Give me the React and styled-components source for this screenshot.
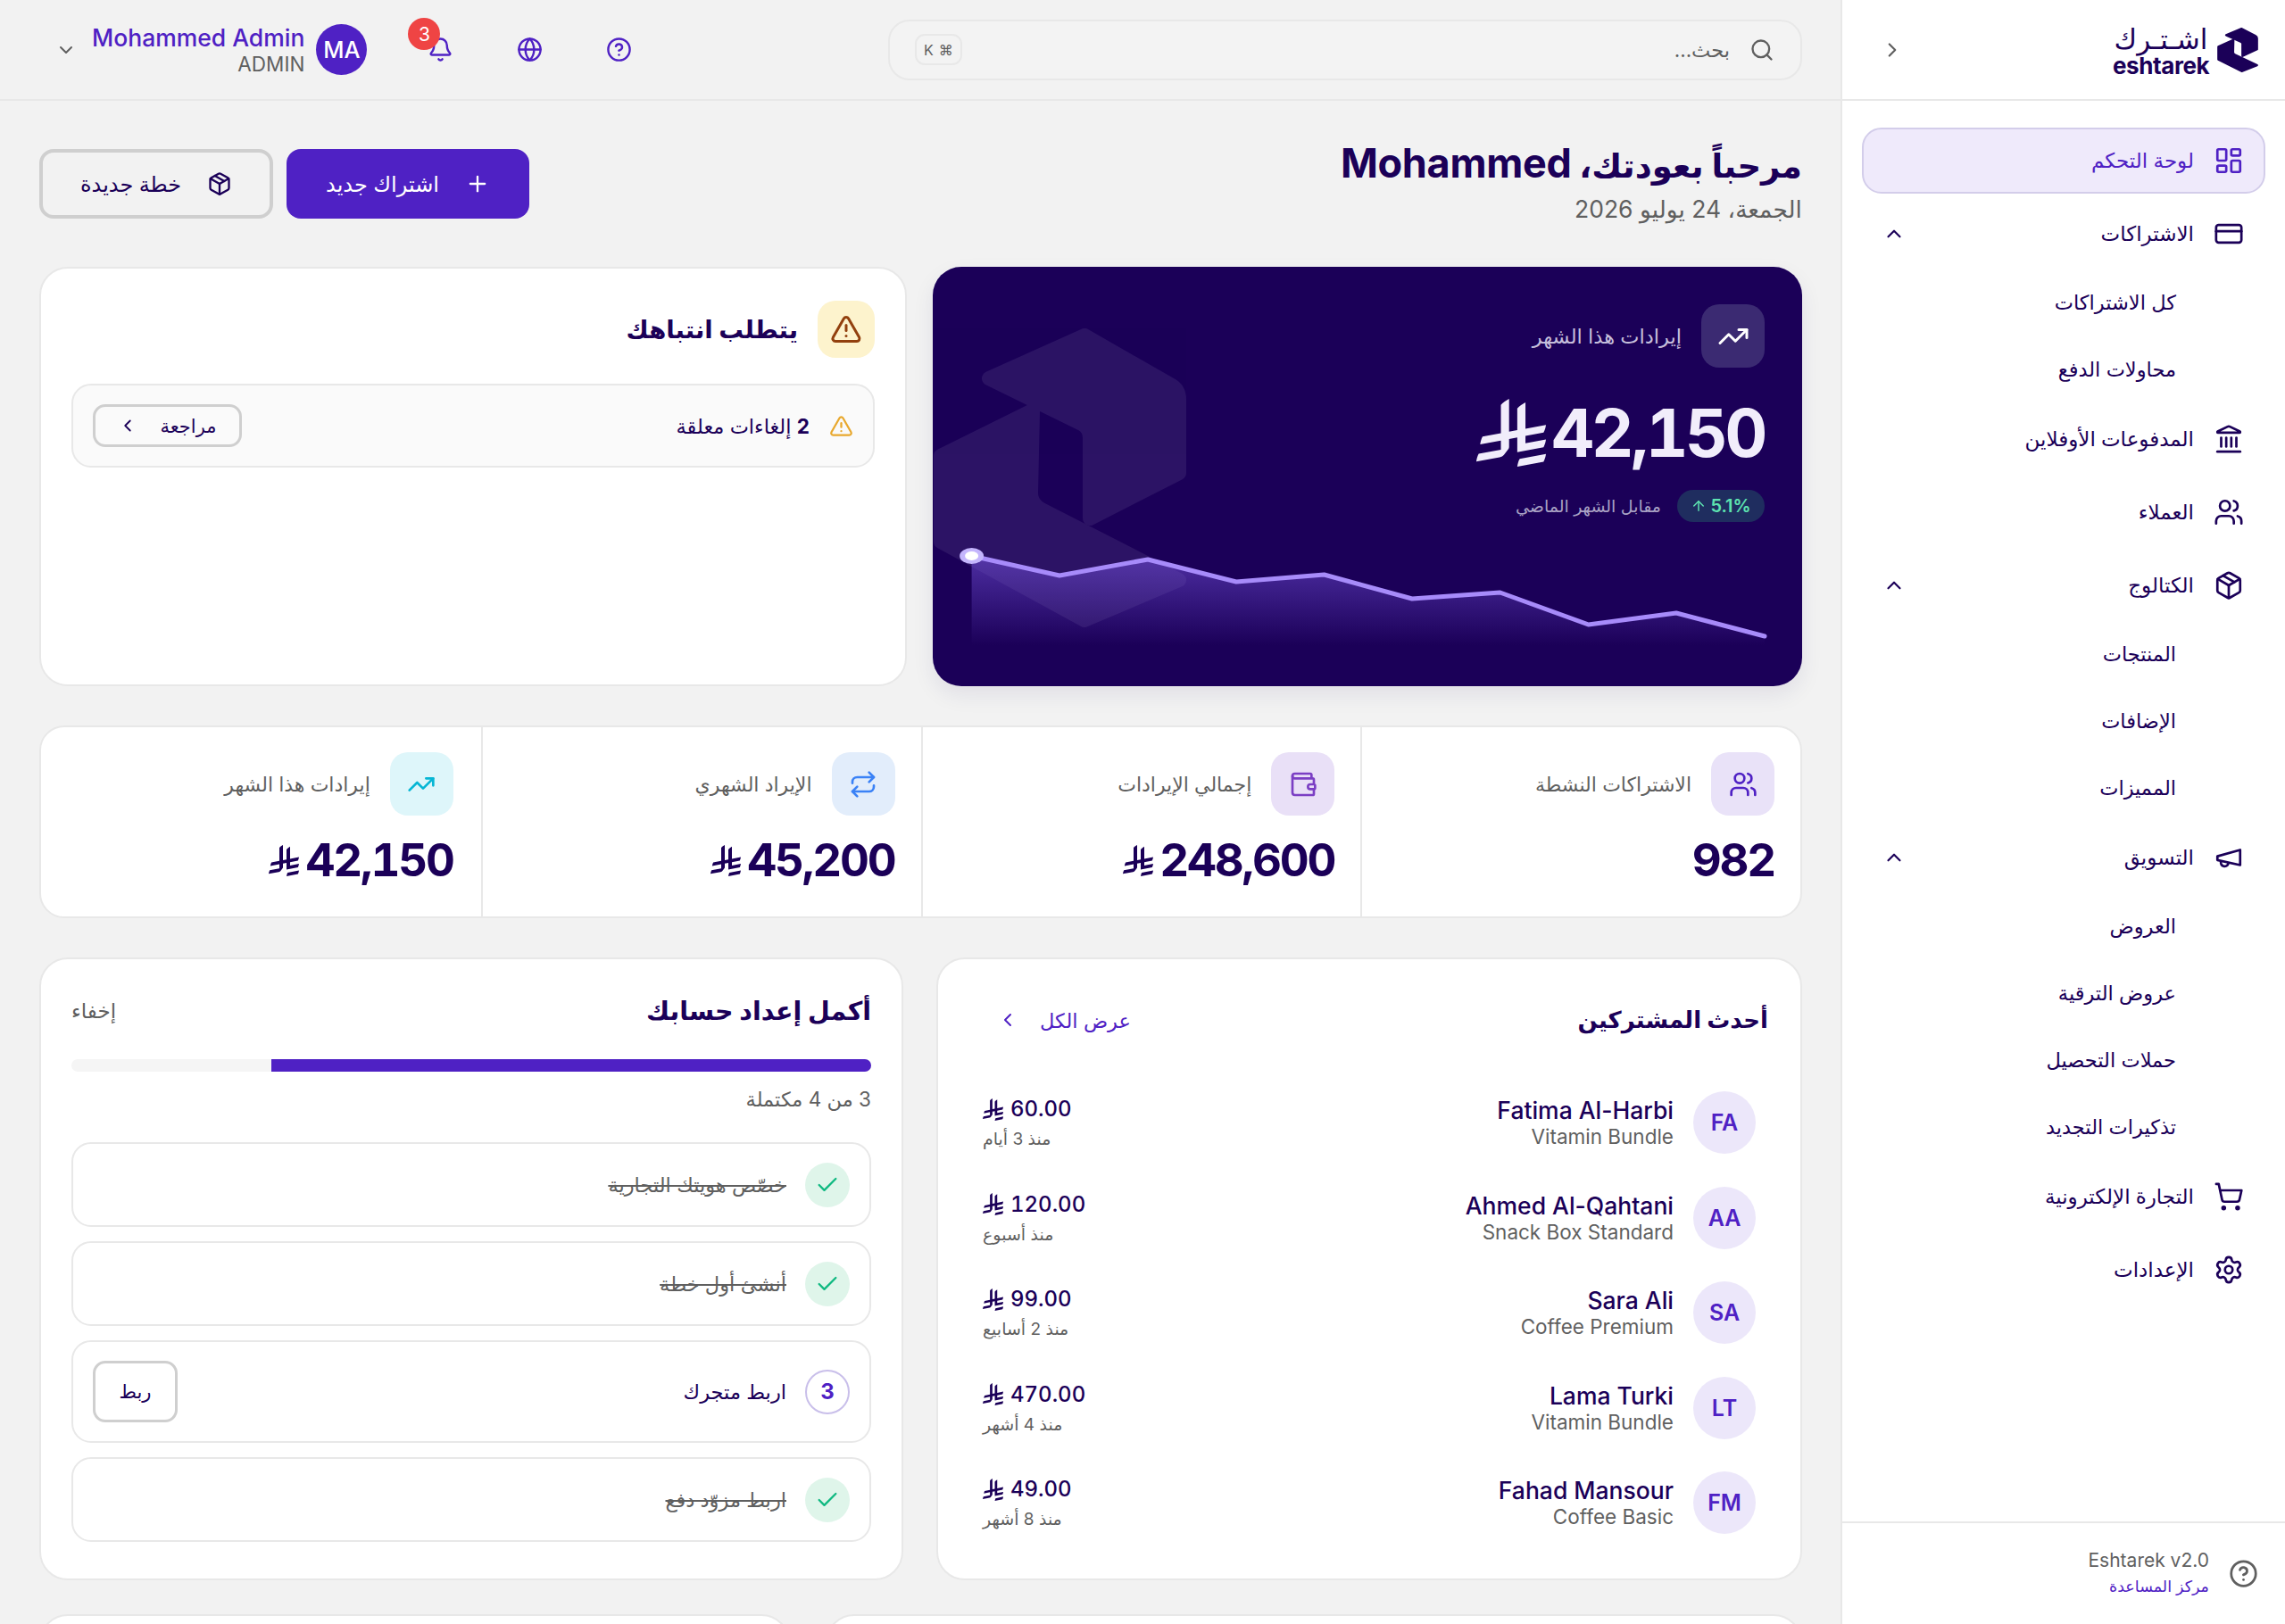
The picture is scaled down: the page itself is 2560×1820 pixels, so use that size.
import React from 'react';
import styled, { createGlobalStyle } from 'styled-components';
import {
  LayoutDashboard, CreditCard, Landmark, Users, Package, ShoppingCart, Settings,
  ChevronUp, ChevronLeft, ChevronRight, ChevronDown, Search, CircleHelp, Globe, Bell, Plus,
  TrendingUp, Wallet, Repeat, TriangleAlert, Check, ArrowUp,
} from 'lucide-react';

const ink = '#1b0058';
const brand = '#4f21c4';
const muted = '#5f5f5f';
const line = '#e8e8e8';
const stack = `Inter, "DejaVu Sans", "Noto Sans", sans-serif`;

const Global = createGlobalStyle`
  html, body { margin: 0; padding: 0; background: #f2f2f2; }
  body { font-family: ${stack}; color: ${ink}; }
  * { box-sizing: border-box; }
`;

const Shell = styled.div`
  direction: rtl;
  display: flex;
  width: 2560px;
  height: 1820px;
  overflow: hidden;
  background: #f2f2f2;
`;

/* ---------- sidebar ---------- */
const Sidebar = styled.aside`
  flex: 0 0 498px;
  display: flex;
  flex-direction: column;
  background: #fff;
  border-left: 2px solid ${line};
`;
const SideHead = styled.div`
  height: 113px;
  flex: none;
  display: flex;
  align-items: center;
  justify-content: space-between;
  padding: 0 30px 0 43px;
  border-bottom: 2px solid ${line};
  color: ${muted};
`;
const Logo = styled.div`
  display: flex;
  align-items: center;
  gap: 9px;
`;
const LogoWords = styled.div`
  display: flex;
  flex-direction: column;
  align-items: stretch;
  width: 108px;
  color: ${ink};
`;
const LogoAr = styled.span`
  font-size: 31px;
  line-height: 36px;
  text-align: center;
`;
const LogoEn = styled.span`
  direction: ltr;
  font-size: 26px;
  line-height: 24px;
  font-weight: 700;
  letter-spacing: -0.4px;
`;
const Nav = styled.nav`
  flex: 1;
  display: flex;
  flex-direction: column;
  gap: 8px;
  padding: 30px 22px 0;
`;
const NavItem = styled.div`
  height: 74px;
  flex: none;
  display: flex;
  align-items: center;
  gap: 22px;
  padding: 0 22px 0 21px;
  border-radius: 22px;
  font-size: 23px;
  font-weight: ${(p) => (p.$active ? 400 : 500)};
  color: ${(p) => (p.$active ? brand : ink)};
  background: ${(p) => (p.$active ? '#efeafb' : 'transparent')};
  border: 2px solid ${(p) => (p.$active ? '#d3cdea' : 'transparent')};
`;
const NavLabel = styled.span`
  flex: 1;
`;
const SubList = styled.div`
  display: flex;
  flex-direction: column;
  gap: 13px;
  padding: 0 100px 3px 0;
`;
const SubItem = styled.div`
  height: 62px;
  display: flex;
  align-items: center;
  font-size: 22.5px;
  color: ${ink};
`;
const SideFoot = styled.div`
  height: 115px;
  flex: none;
  display: flex;
  align-items: center;
  gap: 22px;
  padding: 0 30px;
  border-top: 2px solid ${line};
  color: ${muted};
`;
const FootText = styled.div`
  display: flex;
  flex-direction: column;
  gap: 3px;
`;
const FootVersion = styled.span`
  font-size: 21px;
  line-height: 26px;
  color: ${muted};
`;
const FootLink = styled.span`
  font-size: 17.5px;
  line-height: 26px;
  color: ${brand};
`;

/* ---------- top bar ---------- */
const Main = styled.main`
  flex: 1;
  min-width: 0;
  display: flex;
  flex-direction: column;
  overflow: hidden;
`;
const Topbar = styled.header`
  height: 113px;
  flex: none;
  display: flex;
  align-items: center;
  justify-content: space-between;
  padding: 0 43px 0 62px;
  border-bottom: 2px solid ${line};
`;
const SearchBox = styled.div`
  width: 1024px;
  height: 68px;
  display: flex;
  align-items: center;
  gap: 22px;
  padding: 0 29px 0 28px;
  background: #f3f3f3;
  border: 2px solid ${line};
  border-radius: 24px;
  color: ${muted};
`;
const Placeholder = styled.span`
  flex: 1;
  font-size: 22.5px;
`;
const Kbd = styled.span`
  direction: ltr;
  width: 53px;
  height: 35px;
  display: flex;
  align-items: center;
  justify-content: center;
  gap: 6px;
  font-size: 16px;
  border: 2px solid ${line};
  border-radius: 11px;
`;
const Tools = styled.div`
  display: flex;
  align-items: center;
`;
const ToolIcon = styled.span`
  position: relative;
  width: 100px;
  display: flex;
  justify-content: center;
  color: ${brand};
`;
const Count = styled.span`
  position: absolute;
  top: -21px;
  left: 14px;
  width: 36px;
  height: 36px;
  border-radius: 50%;
  background: #ef4444;
  color: #fff;
  font-size: 21px;
  display: flex;
  align-items: center;
  justify-content: center;
`;
const Avatar = styled.span`
  width: 57px;
  height: 57px;
  margin-right: 32px;
  border-radius: 50%;
  background: ${brand};
  color: #fff;
  font-size: 25.5px;
  font-weight: 500;
  display: flex;
  align-items: center;
  justify-content: center;
`;
const UserText = styled.div`
  display: flex;
  flex-direction: column;
  margin: 0 13px 0 17px;
`;
const UserName = styled.span`
  font-size: 26.5px;
  line-height: 32px;
  font-weight: 500;
  color: ${brand};
`;
const UserRole = styled.span`
  font-size: 22.5px;
  line-height: 28px;
  color: ${muted};
`;

/* ---------- content ---------- */
const Content = styled.div`
  display: flex;
  flex-direction: column;
  padding: 54px 43px 0 44px;
`;
const Heading = styled.div`
  height: 78px;
  display: flex;
  justify-content: space-between;
  align-items: flex-start;
`;
const TitleBlock = styled.div`
  display: flex;
  flex-direction: column;
  margin-top: -9px;
`;
const Title = styled.h1`
  margin: 0;
  font-size: 37px;
  line-height: 50px;
  font-weight: 700;
  color: ${ink};
`;
const TitleName = styled.span`
  font-size: 45px;
  letter-spacing: -0.3px;
`;
const DateText = styled.div`
  margin-top: 5px;
  font-size: 26.5px;
  line-height: 36px;
  color: ${muted};
`;
const Actions = styled.div`
  display: flex;
  gap: 15px;
`;
const Button = styled.div`
  height: 78px;
  width: ${(p) => p.$w}px;
  display: flex;
  align-items: center;
  justify-content: center;
  gap: 29px;
  font-size: 24px;
  font-weight: 500;
  border-radius: 16px;
  color: ${(p) => (p.$primary ? '#fff' : ink)};
  background: ${(p) => (p.$primary ? brand : 'transparent')};
  border: ${(p) => (p.$primary ? 'none' : '4px solid #cfcfcf')};
`;
const TopGrid = styled.div`
  margin-top: 54px;
  display: grid;
  grid-template-columns: 974px 972px;
  gap: 29px;
  height: 470px;
`;
const Hero = styled.section`
  position: relative;
  overflow: hidden;
  display: flex;
  flex-direction: column;
  padding: 42px;
  background: #1b0058;
  border-radius: 32px;
  box-shadow: 0 10px 24px rgba(27, 0, 88, 0.08);
`;
const HeroArt = styled.svg`
  position: absolute;
  left: 0;
  top: 0;
  width: 974px;
  height: 470px;
`;
const HeroHead = styled.div`
  position: relative;
  display: flex;
  align-items: center;
  gap: 22px;
  color: #c6bfdc;
  font-size: 22.5px;
`;
const IconBox = styled.span`
  flex: none;
  width: ${(p) => p.$size || 71}px;
  height: ${(p) => p.$size || 71}px;
  display: flex;
  align-items: center;
  justify-content: center;
  border-radius: 20px;
  background: ${(p) => p.$bg};
  color: ${(p) => p.$fg};
`;
const HeroValue = styled.div`
  position: relative;
  margin-top: 28px;
  height: 90px;
  display: flex;
  align-items: center;
  gap: 6px;
  font-size: 74px;
  line-height: 90px;
  font-weight: 700;
  letter-spacing: -3.4px;
  font-variant-numeric: tabular-nums;
  color: #f1edfb;
`;
const HeroMeta = styled.div`
  position: relative;
  margin-top: 19px;
  display: flex;
  align-items: center;
  gap: 18px;
  font-size: 19px;
  color: #a9a2c4;
`;
const Trend = styled.span`
  height: 36px;
  width: 98px;
  display: flex;
  align-items: center;
  justify-content: center;
  gap: 4px;
  border-radius: 18px;
  background: #1f2d5f;
  color: #5de3b0;
  font-size: 20px;
  font-weight: 600;
`;
const Card = styled.section`
  background: #fff;
  border: 2px solid ${line};
  border-radius: 32px;
`;
const AlertCard = styled(Card)`
  padding: 36px 34px;
`;
const CardHead = styled.div`
  display: flex;
  align-items: center;
  gap: 22px;
`;
const CardTitle = styled.h2`
  margin: 0;
  font-size: ${(p) => p.$size || 28.5}px;
  line-height: 40px;
  font-weight: 700;
  color: ${ink};
`;
const AlertRow = styled.div`
  margin-top: 29px;
  height: 94px;
  display: flex;
  align-items: center;
  gap: 22px;
  padding: 0 22px;
  background: #fafafa;
  border: 2px solid ${line};
  border-radius: 22px;
  font-size: 22.5px;
`;
const AlertText = styled.span`
  flex: 1;
`;
const Strong = styled.b`
  font-weight: 700;
`;
const SmallButton = styled.div`
  height: ${(p) => p.$h}px;
  width: ${(p) => p.$w}px;
  flex: none;
  display: flex;
  align-items: center;
  justify-content: center;
  gap: 25px;
  font-size: 21px;
  color: ${ink};
  background: ${(p) => p.$bg || 'transparent'};
  border: 3px solid #cfcfcf;
  border-radius: 14px;
`;

const Stats = styled(Card)`
  margin-top: 44px;
  display: grid;
  grid-template-columns: repeat(4, 1fr);
  height: 216px;
  border-radius: 28px;
`;
const Stat = styled.div`
  padding: 28px ${(p) => (p.$last ? 31 : 29)}px 0 29px;
  border-left: ${(p) => (p.$last ? 'none' : `2px solid ${line}`)};
`;
const StatHead = styled.div`
  display: flex;
  align-items: center;
  gap: 22px;
  font-size: 22px;
  color: ${muted};
`;
const StatValue = styled.div`
  margin-top: 20px;
  display: flex;
  align-items: center;
  gap: 7px;
  font-size: 51px;
  line-height: 60px;
  font-weight: 700;
  letter-spacing: -2.2px;
  font-variant-numeric: tabular-nums;
  color: ${ink};
`;

const BottomGrid = styled.div`
  margin-top: 44px;
  display: grid;
  grid-template-columns: 970px 968px;
  gap: 37px;
  height: 698px;
`;
const Subscribers = styled(Card)`
  padding: 48px 36px 0 38px;
`;
const HeadRow = styled.div`
  display: flex;
  justify-content: space-between;
  align-items: center;
`;
const ViewAll = styled.span`
  display: flex;
  align-items: center;
  gap: 24px;
  margin-left: 28px;
  font-size: 22.5px;
  color: ${brand};
`;
const SubRows = styled.div`
  margin-top: 60px;
  display: flex;
  flex-direction: column;
  gap: 36.5px;
`;
const SubRow = styled.div`
  height: 70px;
  display: flex;
  align-items: center;
  padding-right: 14px;
  gap: 22px;
`;
const Initials = styled.span`
  flex: none;
  width: 70px;
  height: 70px;
  border-radius: 50%;
  background: #ece7fa;
  color: ${brand};
  font-size: 25px;
  font-weight: 600;
  display: flex;
  align-items: center;
  justify-content: center;
`;
const Person = styled.div`
  flex: 1;
  display: flex;
  flex-direction: column;
`;
const PersonName = styled.span`
  font-size: 26.5px;
  line-height: 32px;
  font-weight: 500;
  color: ${ink};
`;
const PersonPlan = styled.span`
  font-size: 22.5px;
  line-height: 28px;
  color: ${muted};
`;
const Amount = styled.div`
  display: flex;
  flex-direction: column;
  align-items: flex-end;
  margin: 4px 0 0 12px;
`;
const Price = styled.span`
  display: flex;
  flex-direction: row-reverse;
  justify-content: flex-end;
  align-items: center;
  gap: 8px;
  font-size: 24px;
  line-height: 34px;
  font-weight: 500;
  font-variant-numeric: tabular-nums;
  color: ${ink};
`;
const Ago = styled.span`
  font-size: 19px;
  line-height: 34px;
  color: ${muted};
`;

const Setup = styled(Card)`
  padding: 38px 34px 0;
`;
const HideLink = styled.span`
  font-size: 23px;
  color: ${muted};
`;
const Track = styled.div`
  margin-top: 34px;
  height: 14px;
  border-radius: 7px;
  overflow: hidden;
  background: #f5f5f5;
`;
const Fill = styled.div`
  height: 100%;
  background: ${brand};
`;
const ProgressText = styled.div`
  margin-top: 14px;
  font-size: 22.5px;
  line-height: 34px;
  color: ${muted};
`;
const Steps = styled.div`
  margin-top: 31px;
  display: flex;
  flex-direction: column;
  gap: 16px;
`;
const Step = styled.div`
  height: ${(p) => (p.$open ? 115 : 95)}px;
  display: flex;
  align-items: center;
  gap: 21px;
  padding: 0 22px;
  border: 2px solid ${line};
  border-radius: 22px;
`;
const StepMark = styled.span`
  flex: none;
  width: 50px;
  height: 50px;
  border-radius: 50%;
  display: flex;
  align-items: center;
  justify-content: center;
  font-size: 24px;
  font-weight: 700;
  color: ${(p) => (p.$done ? '#10b981' : brand)};
  background: ${(p) => (p.$done ? '#dff5ea' : '#fff')};
  border: ${(p) => (p.$done ? 'none' : '2px solid #c9bfea')};
`;
const StepText = styled.span`
  flex: 1;
  font-size: 22.5px;
  color: ${(p) => (p.$done ? muted : ink)};
  text-decoration: ${(p) => (p.$done ? 'line-through' : 'none')};
`;
const MoreGrid = styled.div`
  margin-top: 38px;
  display: grid;
  grid-template-columns: 1094px 841px;
  gap: 40px;
`;
const MoreCard = styled(Card)`
  height: 300px;
`;

const Riyal = ({ w, h, color = 'currentColor' }) => (
  <svg width={w} height={h} viewBox="0 0 1124.14 1256.39" preserveAspectRatio="none" fill={color} style={{ flex: 'none' }}>
    <path d="M699.62,1113.02h0c-20.06,44.48-33.32,92.75-38.4,143.37l424.51-90.24c20.06-44.47,33.31-92.75,38.4-143.37l-424.51,90.24Z" />
    <path d="M1085.73,895.8c20.06-44.47,33.32-92.75,38.41-143.37l-330.68,70.33v-135.2l292.27-62.11c20.06-44.47,33.32-92.75,38.4-143.37l-330.68,70.27V66.13c-50.67,28.45-95.67,66.32-132.25,110.99v403.35l-132.25,28.11V0c-50.67,28.44-95.67,66.32-132.25,110.99v525.69l-295.91,62.88c-20.06,44.47-33.33,92.75-38.42,143.37l334.33-71.05v170.26l-358.3,76.14c-20.06,44.47-33.32,92.75-38.4,143.37l375.04-79.7c30.53-6.35,56.77-24.4,73.83-49.24l68.78-101.97v-.02c7.14-10.55,11.3-23.27,11.3-36.97v-149.98l132.25-28.11v270.4l424.53-90.28Z" />
  </svg>
);

const markA = 'M170 77 L63 125 L167 176 Q176 181 176 192 L176 282 L276 231 L276 149 Q276 137 266 132 Z';
const markB = 'M112 161 L9 212 L9 308 L170 396 L276 351 L122 272 Q110 266 110 254 Z';

const LogoMark = () => (
  <svg width="46" height="50" viewBox="0 69 285 335" preserveAspectRatio="none" fill={ink} stroke={ink} strokeWidth="16" strokeLinejoin="round">
    <path d={markA} />
    <path d={markB} />
  </svg>
);

const MegaphoneIcon = () => (
  <svg width="34" height="34" viewBox="0 0 24 24" fill="none" stroke="currentColor" strokeWidth="1.9" strokeLinecap="round" strokeLinejoin="round">
    <path d="m3 11 18-5v12L3 14v-3z" />
    <path d="M11.6 16.8a3 3 0 1 1-5.8-1.6" />
  </svg>
);

const navIcon = (I) => () => <I size={34} strokeWidth={1.9} />;

const navTop = [
  { label: 'لوحة التحكم', Icon: navIcon(LayoutDashboard), active: true },
  { label: 'الاشتراكات', Icon: navIcon(CreditCard), open: true, subs: ['كل الاشتراكات', 'محاولات الدفع'] },
  { label: 'المدفوعات الأوفلاين', Icon: navIcon(Landmark) },
  { label: 'العملاء', Icon: navIcon(Users) },
  { label: 'الكتالوج', Icon: navIcon(Package), open: true, subs: ['المنتجات', 'الإضافات', 'المميزات'] },
  { label: 'التسويق', Icon: MegaphoneIcon, open: true, subs: ['العروض', 'عروض الترقية', 'حملات التحصيل', 'تذكيرات التجديد'] },
  { label: 'التجارة الإلكترونية', Icon: navIcon(ShoppingCart) },
  { label: 'الإعدادات', Icon: navIcon(Settings) },
];

const stats = [
  { label: 'الاشتراكات النشطة', value: '982', Icon: Users, bg: '#e9e2f8', fg: '#4f21c4' },
  { label: 'إجمالي الإيرادات', value: '248,600', money: true, Icon: Wallet, bg: '#e9e0f7', fg: '#7b3fc4' },
  { label: 'الإيراد الشهري', value: '45,200', money: true, Icon: Repeat, bg: '#e2edfb', fg: '#3b82f6' },
  { label: 'إيرادات هذا الشهر', value: '42,150', money: true, Icon: TrendingUp, bg: '#def6fa', fg: '#06b6d4' },
];

const people = [
  { id: 'FA', name: 'Fatima Al-Harbi', plan: 'Vitamin Bundle', price: '60.00', ago: 'منذ 3 أيام' },
  { id: 'AA', name: 'Ahmed Al-Qahtani', plan: 'Snack Box Standard', price: '120.00', ago: 'منذ أسبوع' },
  { id: 'SA', name: 'Sara Ali', plan: 'Coffee Premium', price: '99.00', ago: 'منذ 2 أسابيع' },
  { id: 'LT', name: 'Lama Turki', plan: 'Vitamin Bundle', price: '470.00', ago: 'منذ 4 أشهر' },
  { id: 'FM', name: 'Fahad Mansour', plan: 'Coffee Basic', price: '49.00', ago: 'منذ 8 أشهر' },
];

const steps = [
  { text: 'خصّص هويتك التجارية', done: true },
  { text: 'أنشئ أول خطة', done: true },
  { text: 'اربط متجرك', mark: '3', action: 'ربط' },
  { text: 'اربط مزوّد دفع', done: true },
];

const chart = [[43.6, 324], [142, 346], [241, 328], [340, 353], [438.5, 345], [537, 372], [635.6, 365], [734.5, 401], [833, 388], [932, 414]];
const chartLine = chart.map((p) => p.join(',')).join(' ');
const chartArea = `43.6,424 ${chartLine} 932,424`;

export default function App() {
  return (
    <>
      <Global />
      <Shell>
        <Sidebar>
          <SideHead>
            <Logo>
              <LogoMark />
              <LogoWords>
                <LogoAr>اشـتـرك</LogoAr>
                <LogoEn>eshtarek</LogoEn>
              </LogoWords>
            </Logo>
            <ChevronRight size={26} />
          </SideHead>
          <Nav>
            {navTop.map((n) => (
              <React.Fragment key={n.label}>
                <NavItem $active={n.active}>
                  <n.Icon />
                  <NavLabel>{n.label}</NavLabel>
                  {n.open && <ChevronUp size={26} />}
                </NavItem>
                {n.subs && (
                  <SubList>
                    {n.subs.map((s) => <SubItem key={s}>{s}</SubItem>)}
                  </SubList>
                )}
              </React.Fragment>
            ))}
          </Nav>
          <SideFoot>
            <CircleHelp size={33} />
            <FootText>
              <FootVersion>Eshtarek v2.0</FootVersion>
              <FootLink>مركز المساعدة</FootLink>
            </FootText>
          </SideFoot>
        </Sidebar>

        <Main>
          <Topbar>
            <SearchBox>
              <Search size={28} />
              <Placeholder>بحث...</Placeholder>
              <Kbd><span>K</span><span>⌘</span></Kbd>
            </SearchBox>
            <Tools>
              <ToolIcon><CircleHelp size={29} /></ToolIcon>
              <ToolIcon><Globe size={29} /></ToolIcon>
              <ToolIcon><Bell size={29} /><Count>3</Count></ToolIcon>
              <Avatar>MA</Avatar>
              <UserText>
                <UserName>Mohammed Admin</UserName>
                <UserRole>ADMIN</UserRole>
              </UserText>
              <ChevronDown size={24} color={muted} />
            </Tools>
          </Topbar>

          <Content>
            <Heading>
              <TitleBlock>
                <Title>مرحباً بعودتك، <TitleName>Mohammed</TitleName></Title>
                <DateText>الجمعة، 24 يوليو 2026</DateText>
              </TitleBlock>
              <Actions>
                <Button $primary $w={272}><Plus size={28} />اشتراك جديد</Button>
                <Button $w={262}><Package size={28} />خطة جديدة</Button>
              </Actions>
            </Heading>

            <TopGrid>
              <Hero>
                <HeroArt viewBox="0 0 974 470" fill="none">
                  <g fill="#fff" stroke="#fff" strokeWidth="16" strokeLinejoin="round" opacity="0.075">
                    <path d={markA} />
                    <path d={markB} />
                  </g>
                  <defs>
                    <linearGradient id="heroFill" x1="0" y1="0" x2="0" y2="1">
                      <stop offset="0" stopColor="#6d4bd1" stopOpacity="0.62" />
                      <stop offset="1" stopColor="#6d4bd1" stopOpacity="0" />
                    </linearGradient>
                  </defs>
                  <polygon points={chartArea} fill="url(#heroFill)" />
                  <polyline points={chartLine} stroke="#a78bfa" strokeWidth="5" strokeLinejoin="round" strokeLinecap="round" />
                  <ellipse cx="43.6" cy="324" rx="13.5" ry="9" fill="#c4b5fd" />
                  <ellipse cx="43.6" cy="324" rx="7.5" ry="5" fill="#fff" />
                </HeroArt>
                <HeroHead>
                  <IconBox $bg="#3b2a72" $fg="#fff"><TrendingUp size={36} /></IconBox>
                  <span>إيرادات هذا الشهر</span>
                </HeroHead>
                <HeroValue>
                  <span>42,150</span>
                  <Riyal w={78} h={76} />
                </HeroValue>
                <HeroMeta>
                  <Trend><span>5.1%</span><ArrowUp size={18} /></Trend>
                  <span>مقابل الشهر الماضي</span>
                </HeroMeta>
              </Hero>

              <AlertCard>
                <CardHead>
                  <IconBox $size={64} $bg="#fdf3cd" $fg="#92400e"><TriangleAlert size={36} /></IconBox>
                  <CardTitle $size={27.5}>يتطلب انتباهك</CardTitle>
                </CardHead>
                <AlertRow>
                  <TriangleAlert size={27} color="#e8a82e" />
                  <AlertText><Strong>2</Strong> إلغاءات معلقة</AlertText>
                  <SmallButton $w={167} $h={48}>مراجعة<ChevronLeft size={22} /></SmallButton>
                </AlertRow>
              </AlertCard>
            </TopGrid>

            <Stats>
              {stats.map((s, i) => (
                <Stat key={s.label} $last={i === 3}>
                  <StatHead>
                    <IconBox $bg={s.bg} $fg={s.fg}><s.Icon size={32} /></IconBox>
                    <span>{s.label}</span>
                  </StatHead>
                  <StatValue>
                    <span>{s.value}</span>
                    {s.money && <Riyal w={34} h={35} />}
                  </StatValue>
                </Stat>
              ))}
            </Stats>

            <BottomGrid>
              <Subscribers>
                <HeadRow>
                  <CardTitle $size={26}>أحدث المشتركين</CardTitle>
                  <ViewAll>عرض الكل<ChevronLeft size={24} /></ViewAll>
                </HeadRow>
                <SubRows>
                  {people.map((p) => (
                    <SubRow key={p.id}>
                      <Initials>{p.id}</Initials>
                      <Person>
                        <PersonName>{p.name}</PersonName>
                        <PersonPlan>{p.plan}</PersonPlan>
                      </Person>
                      <Amount>
                        <Price><Riyal w={23} h={25} /><span>{p.price}</span></Price>
                        <Ago>{p.ago}</Ago>
                      </Amount>
                    </SubRow>
                  ))}
                </SubRows>
              </Subscribers>

              <Setup>
                <HeadRow>
                  <CardTitle>أكمل إعداد حسابك</CardTitle>
                  <HideLink>إخفاء</HideLink>
                </HeadRow>
                <Track><Fill style={{ width: '75%' }} /></Track>
                <ProgressText>3 من 4 مكتملة</ProgressText>
                <Steps>
                  {steps.map((s) => (
                    <Step key={s.text} $open={!!s.action}>
                      <StepMark $done={s.done}>{s.done ? <Check size={28} /> : s.mark}</StepMark>
                      <StepText $done={s.done}>{s.text}</StepText>
                      {s.action && <SmallButton $w={95} $h={69} $bg="#fff">{s.action}</SmallButton>}
                    </Step>
                  ))}
                </Steps>
              </Setup>
            </BottomGrid>

            <MoreGrid>
              <MoreCard />
              <MoreCard />
            </MoreGrid>
          </Content>
        </Main>
      </Shell>
    </>
  );
}
